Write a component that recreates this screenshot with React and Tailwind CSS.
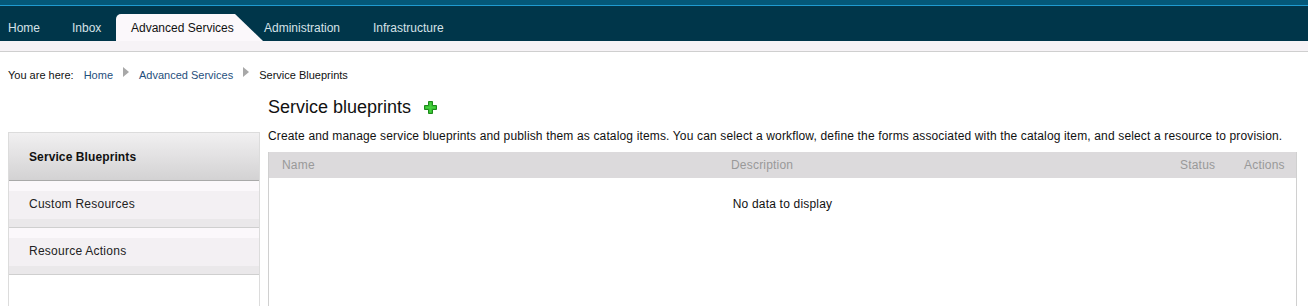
import React from "react";

const Arrow = () => (
  <span className="inline-block w-0 h-0 border-y-[5px] border-y-transparent border-l-[6px] border-l-[#a8a8a8] mx-[10px] align-middle" />
);

const SideItem = ({ label }) => (
  <div className="h-[47px] border-b border-[#cfcfcf] bg-[linear-gradient(#fbf8fb_0px,#fbf8fb_10px,#f3f0f3_10px,#f3f0f3_38px,#eae8ea_38px)] flex items-center pl-[20px] text-[12px] tracking-[0.25px] text-[#222]">
    {label}
  </div>
);

const App = () => {
  return (
    <div className="w-[1308px] h-[306px] bg-white overflow-hidden font-['Liberation_Sans',Arial,sans-serif]">
      {/* top nav */}
      <div className="h-[5px] bg-[#045878]" />
      <div className="h-px bg-[#1f9bd0]" />
      <div className="h-[35px] bg-[#00364a] flex items-end text-[12px] text-[#d6e2e8]">
        <div className="w-[64px] h-[27px] flex items-center pl-[8px]">Home</div>
        <div className="w-[52px] h-[27px] flex items-center pl-[8px]">Inbox</div>
        <div className="w-[147px] h-[27px] flex items-center pl-[15px] text-[#111] bg-[#fbf8fb] rounded-tl-[5px] [clip-path:polygon(0_0,119px_0,147px_100%,0_100%)]">
          Advanced Services
        </div>
        <div className="w-[110px] h-[27px] flex items-center pl-[1px]">Administration</div>
        <div className="h-[27px] flex items-center">Infrastructure</div>
      </div>
      <div className="h-[10px] bg-[#f6f3f6] border-b border-[#cfcfcf] box-content" />

      {/* breadcrumb */}
      <div className="pl-[8px] pt-[15px] h-[45px] text-[11px] flex items-start">
        <span className="text-[#111] mr-[10px]">You are here:</span>
        <span className="text-[#1f4f7d]">Home</span>
        <Arrow />
        <span className="text-[#1f4f7d]">Advanced Services</span>
        <Arrow />
        <span className="text-[#111]">Service Blueprints</span>
      </div>

      <div className="flex">
        {/* sidebar */}
        <div className="w-[252px] ml-[8px] mt-[35px] shrink-0 border-l border-r border-t border-[#dcdcdc] h-[180px]">
          <div className="h-[48px] bg-[linear-gradient(#f1f0f1,#d3d2d3)] border-b border-[#a9a9a9] flex items-center pl-[20px] text-[12px] tracking-[0.1px] font-bold text-[#111]">
            Service Blueprints
          </div>
          <SideItem label="Custom Resources" />
          <SideItem label="Resource Actions" />
        </div>

        {/* main */}
        <div className="ml-[8px] w-[1029px]">
          <div className="flex items-center h-[22px] mt-[-1px]">
            <h1 className="text-[18px] text-[#111] leading-none">Service blueprints</h1>
            <svg width="13" height="13" viewBox="0 0 13 13" className="ml-[13px]">
              <path d="M4.5 0.5h4v4h4v4h-4v4h-4v-4h-4v-4h4z" fill="#2fb72a" stroke="#1d8a1a" strokeWidth="1" />
              <path d="M5.5 1.5h2v4h4v2h-4v4h-2v-4h-4v-2h4z" fill="#46d03e" />
            </svg>
          </div>
          <p className="mt-[11px] text-[12px] tracking-[0.15px] text-[#111] leading-[14px] whitespace-nowrap">
            Create and manage service blueprints and publish them as catalog items. You can select a workflow, define the forms associated with the catalog item, and select a resource to provision.
          </p>
          <div className="mt-[9px] border-l border-r border-[#d0d0d0] h-[200px]">
            <div className="h-[26px] bg-[#dcdadc] flex items-center text-[12px] tracking-[0.2px] text-[#999]">
              <div className="pl-[13px] w-[462px]">Name</div>
              <div className="flex-1">Description</div>
              <div className="w-[64px]">Status</div>
              <div className="w-[52px]">Actions</div>
            </div>
            <div className="text-center text-[12px] tracking-[0.2px] text-[#111] pt-[17px]">No data to display</div>
          </div>
        </div>
      </div>
    </div>
  );
};

export default App;
